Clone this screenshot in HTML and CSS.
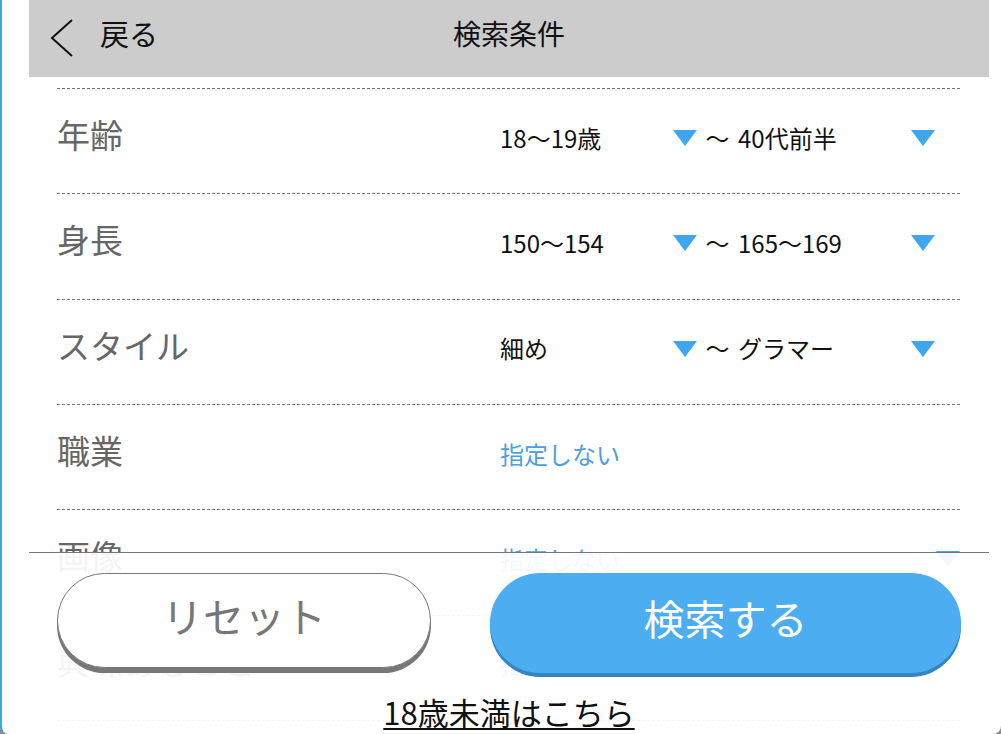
FILE: index.html
```html
<!DOCTYPE html>
<html lang="ja">
<head>
  <meta charset="UTF-8">
  <meta name="viewport" content="width=device-width, initial-scale=1.0">
  <title>検索条件</title>
  <link rel="stylesheet" href="styles.css">
</head>
<body>
  <div class="page">
    <header class="topbar">
      <a class="back" href="#">
        <svg class="chevron" width="24" height="38" viewBox="0 0 24 38">
          <polyline points="22,1 2,19 22,37" fill="none" stroke="#111" stroke-width="2"/>
        </svg>
        <span>戻る</span>
      </a>
      <h1 class="title">検索条件</h1>
      <span></span>
    </header>

    <ul class="conditions">
      <li class="row">
        <span class="label">年齢</span>
        <div class="range">
          <div class="select">18〜19歳<i class="arrow"></i></div>
          <span class="tilde">〜</span>
          <div class="select">40代前半<i class="arrow"></i></div>
        </div>
      </li>
      <li class="row">
        <span class="label">身長</span>
        <div class="range">
          <div class="select">150〜154<i class="arrow"></i></div>
          <span class="tilde">〜</span>
          <div class="select">165〜169<i class="arrow"></i></div>
        </div>
      </li>
      <li class="row">
        <span class="label">スタイル</span>
        <div class="range">
          <div class="select">細め<i class="arrow"></i></div>
          <span class="tilde">〜</span>
          <div class="select">グラマー<i class="arrow"></i></div>
        </div>
      </li>
      <li class="row">
        <span class="label">職業</span>
        <span class="any">指定しない</span>
      </li>
      <li class="row">
        <span class="label">画像</span>
        <div class="select wide any">指定しない<i class="arrow"></i></div>
      </li>
      <li class="row">
        <span class="label">興味あること</span>
        <span class="any">指定しない</span>
      </li>
    </ul>

    <footer class="actions">
      <div class="buttons">
        <button class="btn reset">リセット</button>
        <button class="btn search">検索する</button>
      </div>
      <a class="under18" href="#">18歳未満はこちら</a>
    </footer>
  </div>
</body>
</html>
```

FILE: styles.css
```css
* {
  margin: 0;
  padding: 0;
  box-sizing: border-box;
}

body {
  background-color: #8a8a8a;
  font-family: "Noto Sans CJK JP", "Noto Sans", sans-serif;
  color: #111;
}

.page {
  position: relative;
  height: 734px;
  background-color: #fff;
  border-left: 2px solid #3aa8f0;
  border-radius: 0 0 8px 8px;
  padding-left: 27px;
  overflow: hidden;
}

/* Header */
.topbar {
  width: 960px;
  height: 77px;
  padding-bottom: 12px;
  background-color: #ccc;
  display: grid;
  grid-template-columns: 1fr auto 1fr;
  align-items: center;
}

.back {
  display: flex;
  align-items: center;
  padding-left: 21px;
  color: #111;
  text-decoration: none;
  font-size: 29px;
}

.chevron {
  margin-right: 26px;
  margin-top: 11px;
}

.title {
  font-size: 28px;
  font-weight: normal;
}

/* Condition list */
.conditions {
  list-style: none;
  width: 903px;
  margin: 11px 0 0 28px;
  border-bottom: 1px dashed #777;
}

.row {
  height: 105.33px;
  border-top: 1px dashed #777;
  display: flex;
  align-items: center;
}

.label {
  width: 443px;
  font-size: 33px;
  color: #666;
  margin-top: -14px;
}

.range,
.row > .any,
.select.wide {
  margin-bottom: 8px;
}

.range {
  display: flex;
  align-items: center;
}

.select {
  width: 197px;
  display: flex;
  align-items: center;
  justify-content: space-between;
  font-size: 24px;
}

.select.wide {
  width: 460px;
}

.arrow {
  width: 0;
  height: 0;
  margin-top: 2px;
  border-left: 12px solid transparent;
  border-right: 12px solid transparent;
  border-top: 16px solid #3fa6ee;
}

.tilde {
  width: 41px;
  text-align: center;
  font-size: 24px;
}

.any {
  font-size: 24px;
  color: #4a9fe0;
}

/* Bottom actions, over the list */
.actions {
  position: absolute;
  left: 27px;
  top: 552px;
  bottom: 0;
  width: 960px;
  background-color: rgba(255, 255, 255, 0.93);
  border-top: 1px solid #777;
  padding: 20px 28px 0;
  text-align: center;
}

.buttons {
  display: flex;
  justify-content: space-between;
}

.btn {
  font-family: inherit;
  font-size: 41px;
  padding-bottom: 12px;
  border-radius: 50px;
  cursor: pointer;
}

.reset {
  width: 374px;
  height: 95px;
  background-color: #fff;
  color: #777;
  border: 1px solid #777;
  box-shadow: 0 5px 0 #777;
}

.search {
  width: 471px;
  height: 100px;
  background-color: #4caef0;
  color: #fff;
  border: none;
  box-shadow: 0 4px 0 #3684c2;
}

.under18 {
  display: inline-block;
  margin-top: 22px;
  font-size: 31px;
  line-height: 34px;
  color: #111;
  text-decoration: underline;
  text-decoration-thickness: 2px;
  text-underline-offset: 3px;
}
```
